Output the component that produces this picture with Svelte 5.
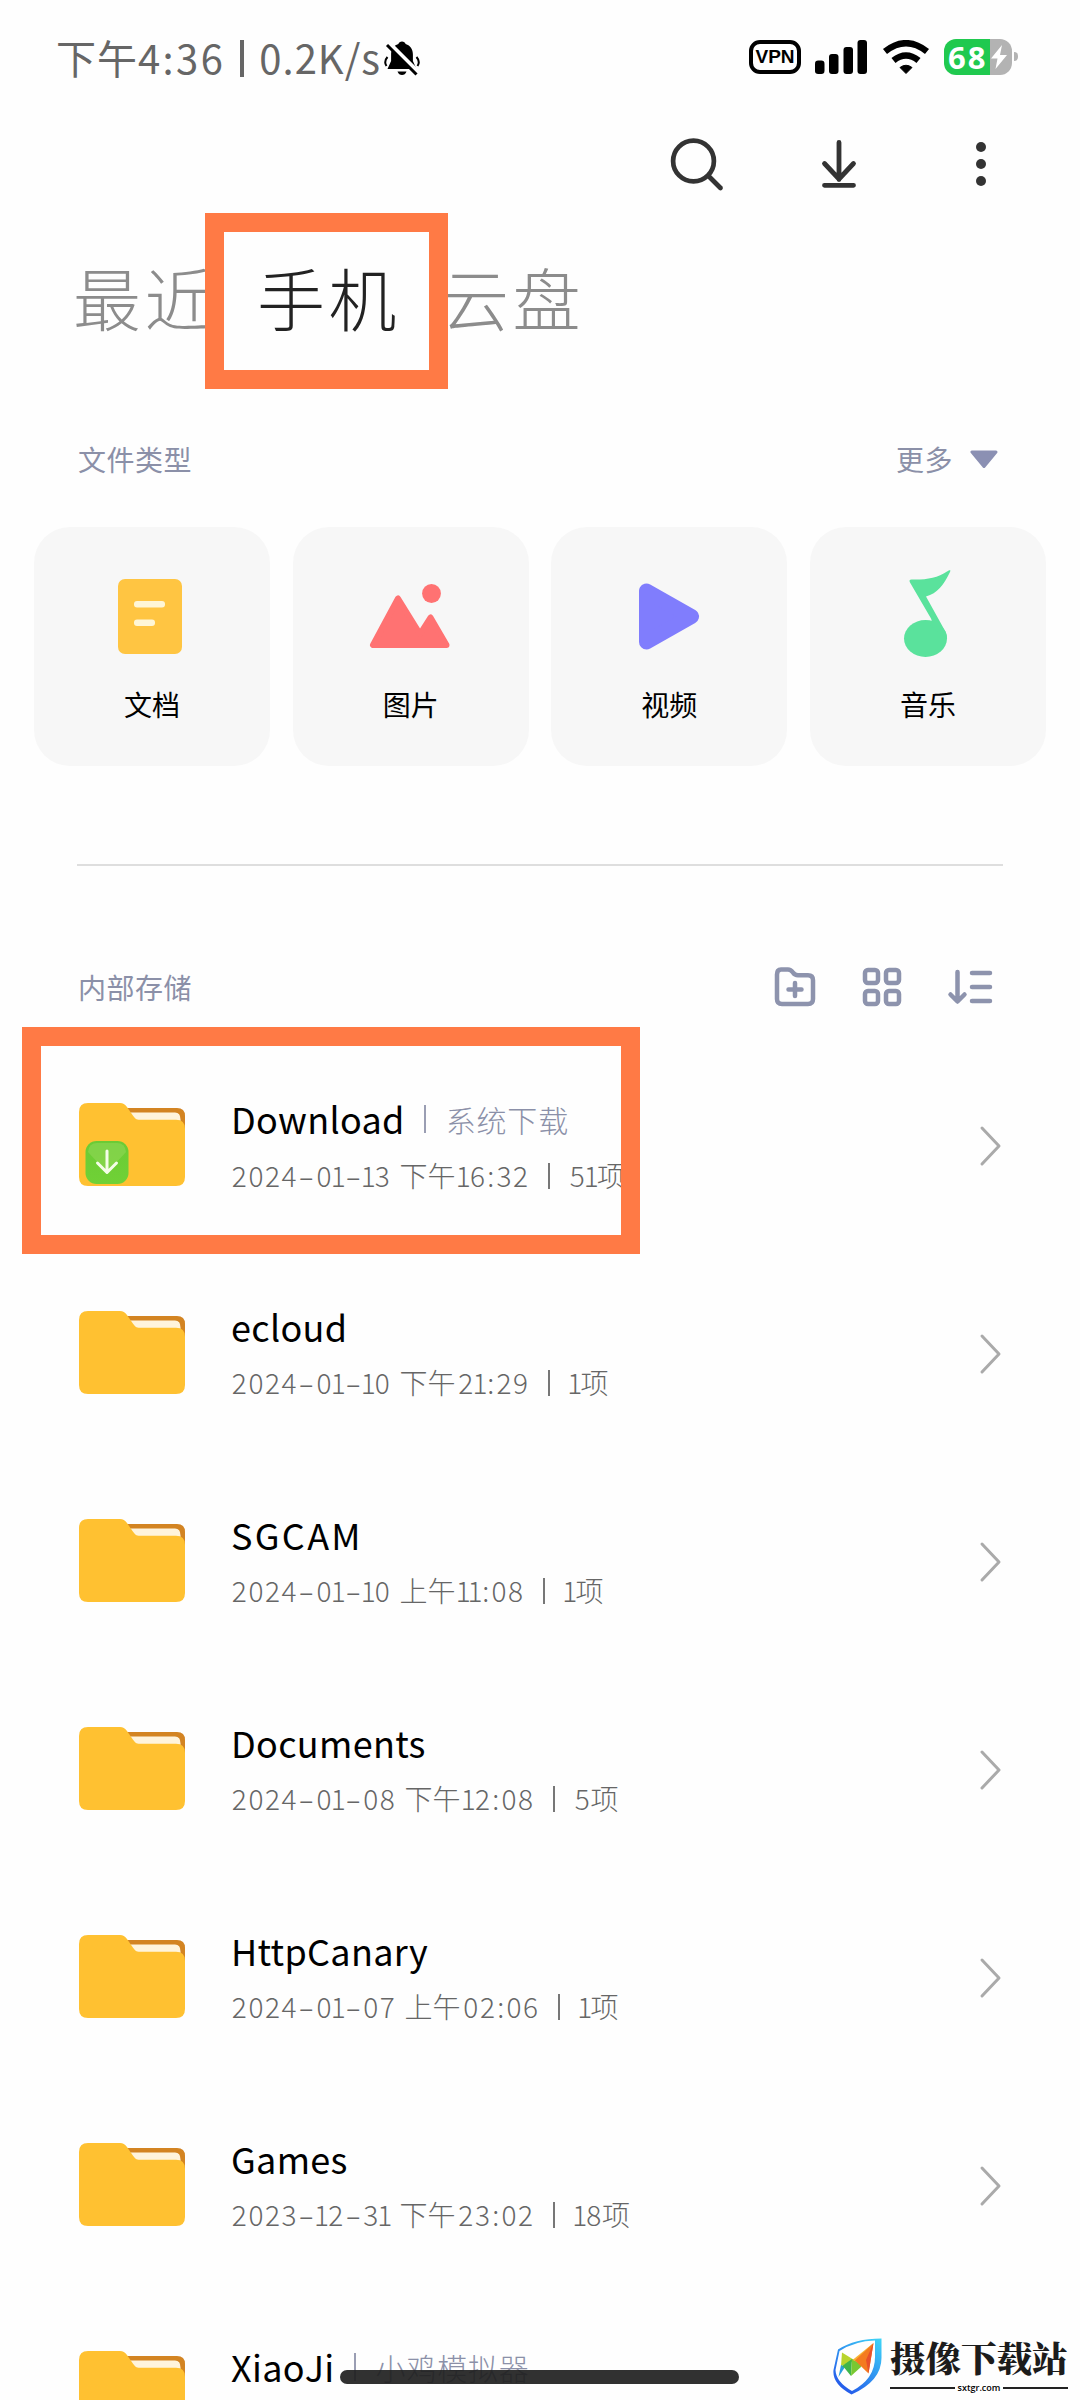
<script>
  const types = [
    { id: 'doc', label: '文档' },
    { id: 'pic', label: '图片' },
    { id: 'video', label: '视频' },
    { id: 'music', label: '音乐' }
  ];
  const folders = [
    { name: 'Download', note: '系统下载', date: '2024-01-13', half: '下午', time: '16:32', count: '51', badge: true },
    { name: 'ecloud', date: '2024-01-10', half: '下午', time: '21:29', count: '1' },
    { name: 'SGCAM', date: '2024-01-10', half: '上午', time: '11:08', count: '1', wide: true },
    { name: 'Documents', date: '2024-01-08', half: '下午', time: '12:08', count: '5' },
    { name: 'HttpCanary', date: '2024-01-07', half: '上午', time: '02:06', count: '1' },
    { name: 'Games', date: '2023-12-31', half: '下午', time: '23:02', count: '18' },
    { name: 'XiaoJi', note: '小鸡模拟器' }
  ];
  // Proportional figures: a narrow 1, a wide hyphen.
  const kind = (c) => (c === '1' ? 'one' : c === '-' ? 'dash' : c === ':' ? 'colon' : 'fig');
</script>

{#snippet figures(text)}
  <span class="figures">{#each [...text] as c}<span class={kind(c)}>{c}</span>{/each}</span>
{/snippet}

<div class="screen">
  <header class="status">
    <div class="clock"><span class="half">下午</span><span class="time">4:36</span><span class="bar"></span><span class="rate">0.2K/s</span></div>
    <svg class="bell" width="36" height="36" viewBox="0 0 36 36">
      <path d="M18 1.500c1.800 0 3.200 1 3.600 2.500 5 1.500 7.300 5.600 7.300 10.500v6.500l3.600 8H3.500l3.600-8v-6.500c0-4.900 2.300-9 7.300-10.500.4-1.500 1.800-2.500 3.600-2.500z" />
      <path d="M13.500 31.500h9c-.8 2.500-2.500 3.500-4.500 3.500s-3.700-1-4.500-3.500z" />
      <path d="M3.500 17q-4 4.500-1 9M32.500 17q4 4.500 1 9" fill="none" stroke="#000" stroke-width="2" />
      <path d="M5 3l29 29" stroke="#fff" stroke-width="4.500" />
      <path d="M3 5l29.500 29.500" stroke="#000" stroke-width="3" />
    </svg>
    <div class="indicators">
      <div class="vpn">VPN</div>
      <svg class="signal" width="53" height="34" viewBox="0 0 53 34">
        <rect x="0" y="20.500" width="9.500" height="13.500" rx="3.200" /><rect x="14" y="14" width="9.500" height="20" rx="3" />
        <rect x="28.500" y="7" width="9.500" height="27" rx="3" /><rect x="42.500" y="0" width="9.500" height="34" rx="3" />
      </svg>
      <svg class="wifi" width="48" height="34" viewBox="0 0 48 34">
        <path d="M3 11.500Q24-5 45 11.500M11.500 20.500Q24 10.500 36.500 20.500" fill="none" stroke="#000" stroke-width="6.500" />
        <path d="M18 27.500q6-4.500 12 0L24 33.500z" stroke="#000" stroke-width="1" stroke-linejoin="round" />
      </svg>
      <div class="battery">
        <span class="level">68</span>
        <svg width="16" height="24" viewBox="0 0 16 24"><path d="M11 0L0 13.500h6.500L4.500 24 16 10H9z" fill="#fff" /></svg>
        <i class="nub"></i>
      </div>
    </div>
  </header>

  <nav class="actions">
    <svg width="56" height="56" viewBox="0 0 56 56"><g fill="none" stroke="#333" stroke-width="4.700" stroke-linecap="round"><circle cx="24.500" cy="25" r="20.400" /><path d="M39.500 40l12 12" /></g></svg>
    <svg width="56" height="56" viewBox="0 0 56 56"><path d="M28 6.500v37M13.500 27.500L28 43l14.500-15.500M13.500 49.300h29" fill="none" stroke="#333" stroke-width="4.800" stroke-linecap="round" stroke-linejoin="round" /></svg>
    <svg width="56" height="56" viewBox="0 0 56 56"><g fill="#333"><circle cx="28" cy="11" r="5" /><circle cx="28" cy="28" r="5" /><circle cx="28" cy="45" r="5" /></g></svg>
  </nav>

  <nav class="tabs">
    <span class="tab">最近</span>
    <span class="tab current">手机</span>
    <span class="tab">云盘</span>
    <i class="mark mark-tab"></i>
  </nav>

  <section class="kinds">
    <div class="heading">
      <span>文件类型</span>
      <span class="more">更多<svg width="28" height="19" viewBox="0 0 28 19"><path d="M2 2h24L14 16.500z" fill="#8b90b3" stroke="#8b90b3" stroke-width="3" stroke-linejoin="round" /></svg></span>
    </div>
    <div class="cards">
      {#each types as type}
        <div class="card">
          <svg width="96" height="96" viewBox="0 0 96 96">
            {#if type.id === 'doc'}
              <rect x="14" y="11" width="64" height="75" rx="7" fill="#ffc542" />
              <rect x="30" y="33" width="31" height="6.500" rx="3" fill="#fff6d6" />
              <rect x="30" y="51.500" width="21" height="6.500" rx="3" fill="#fff6d6" />
            {:else if type.id === 'pic'}
              <circle cx="68.500" cy="25.500" r="9.400" fill="#ff7272" />
              <path d="M35 30.500L10 77H83.500L67.500 49.500 57 66z" fill="#ff7272" stroke="#ff7272" stroke-width="6" stroke-linejoin="round" />
            {:else if type.id === 'video'}
              <path d="M25.500 23v51L70.500 48.500z" fill="#807dfd" stroke="#807dfd" stroke-width="15" stroke-linejoin="round" />
            {:else}
              <ellipse cx="45.500" cy="70.500" rx="21.500" ry="18.500" fill="#5ae29c" />
              <path d="M31.500 11.500c14 .5 26-1.500 35.500-8 3-2 4-1.500 3 .5C63.500 17 57.500 25.500 46 28.500L64 61c2 3 3 6 3 9.500L50.500 58q2-5 .5-7.500L30 14.500q-1.500-3 1.500-3z" fill="#5ae29c" />
            {/if}
          </svg>
          <span>{type.label}</span>
        </div>
      {/each}
    </div>
  </section>

  <hr />

  <section class="storage">
    <div class="heading">
      <span>内部存储</span>
      <div class="tools">
        <svg width="44" height="40" viewBox="0 0 44 40"><path d="M8 2.500h7c2.500 0 3.500 1 5 3 1.300 2 2.500 2.700 5 2.700h10c3.600 0 5 1.600 5 5V32c0 3.400-1.600 5-5 5H9c-3.400 0-5-1.600-5-5V7.500c0-3.400 1.200-5 4-5zM22 16v13M15.500 22.500h13" /></svg>
        <svg width="40" height="40" viewBox="0 0 40 40"><rect x="3" y="3" width="13" height="13" rx="3" /><rect x="24" y="3" width="13" height="13" rx="3" /><rect x="3" y="24" width="13" height="13" rx="3" /><rect x="24" y="24" width="13" height="13" rx="3" /></svg>
        <svg width="46" height="40" viewBox="0 0 46 40"><path d="M10.500 5v29M3.500 27.500l7 7 7-7M25 6h18M25 20h18M25 34h18" /></svg>
      </div>
    </div>
    <ul class="list">
      {#each folders as f}
        <li>
          <svg class="folder" width="106" height="84" viewBox="0 0 106 84">
            <path d="M45 5h53q8 0 8 8v20H45z" fill="#d38422" />
            <path d="M50 9.500h46q5.500 0 5.500 7v18H50z" fill="#fff4dc" />
            <path d="M9 0h32c3 0 5 1.500 7 4l5.500 8c1.500 2 3 4.700 6 4.700H97q9 0 9 9V74q0 9-9 9H9q-9 0-9-9V9q0-9 9-9z" fill="#ffc131" />
            {#if f.badge}
              <defs><linearGradient id="leaf" x1="0" y1="0" x2="0" y2="1"><stop offset="0" stop-color="#6bcb35" /><stop offset="1" stop-color="#70d136" /></linearGradient></defs>
              <rect x="6.500" y="38" width="43" height="43" rx="11" fill="url(#leaf)" />
              <path d="M9 49L28 69.500 47 49q-1-9-9-9H18q-8 0-9 9z" fill="#93d957" opacity=".55" />
              <path d="M28 48v20M18.500 60l9.500 9.500 9.500-9.500" fill="none" stroke="#f4fde8" stroke-width="3" stroke-linecap="round" stroke-linejoin="round" />
            {/if}
          </svg>
          <div class="text">
            <div class="name"><span class:wide={f.wide}>{f.name}</span>{#if f.note}<i class="sep"></i><span class="note">{f.note}</span>{/if}</div>
            <div class="meta">
              {#if f.date}{@render figures(f.date)}<span class="cn">{f.half}</span>{@render figures(f.time)}<i class="sep"></i>{@render figures(f.count)}<span>项</span>{/if}
            </div>
          </div>
          {#if f.date}
            <svg class="chev" width="24" height="42" viewBox="0 0 24 42"><path d="M3 3l17 18L3 39" fill="none" stroke="#aaa" stroke-width="3" stroke-linecap="round" stroke-linejoin="round" /></svg>
          {/if}
        </li>
      {/each}
    </ul>
    <i class="mark mark-row"></i>
  </section>

  <i class="home"></i>
  <div class="stamp">
    <svg width="50" height="58" viewBox="0 0 50 58">
      <defs><linearGradient id="shield" x1="1" y1="0" x2="0.300" y2="1"><stop offset="0" stop-color="#3fd6f7" /><stop offset="1" stop-color="#2459ea" /></linearGradient></defs>
      <path fill-rule="evenodd" d="M5 12.500Q22 1.500 48.500 1.500V20Q49 44 18.500 57.500 -1 47 0.500 33zM6.500 14L2.500 33Q3 45 19 54 42 42 42 20V3.500Q22 4 6.500 14z" fill="url(#shield)" />
      <path d="M9 15.500L22 23.500 8 29z" fill="#b8d42e" />
      <path d="M8 28L12 30 5.500 40z" fill="#2a9fe0" />
      <path d="M9 29L19 22 18 39 11.500 31z" fill="#3fb54a" />
      <path d="M19 22L28 27V30L18 39z" fill="#79c832" />
      <path d="M19.500 23L40.500 6 27 26z" fill="#f9b233" />
      <path d="M40.500 6L35.500 36.500 22 23.500z" fill="#f47b20" />
      <path d="M40.500 6L35.500 36.500 33 23z" fill="#e8502a" />
    </svg>
    <div class="brand"><b>摄像下载站</b><span class="url">sxtgr.com</span></div>
  </div>
</div>

<style>
  :global(body) { margin: 0; background: #fff; }
  .screen { position: relative; width: 1080px; height: 2400px; overflow: hidden; background: #fefefe; font-family: 'Noto Sans CJK SC', sans-serif; color: #000; display: flex; flex-direction: column; }
  .screen > * { flex: none; }
  svg { display: block; flex: none; }
  i { display: block; }
  .status { height: 114px; box-sizing: border-box; padding: 0 68px 0 56px; display: flex; align-items: center; }
  .clock { display: flex; align-items: center; font-size: 40px; line-height: 56px; color: #666; }
  .half { letter-spacing: 1px; }
  .time { letter-spacing: 2.400px; }
  .bar { width: 4px; height: 37px; background: #666; margin: 2px 15px 0 15px; }
  .rate { letter-spacing: 1px; }
  .bell { margin: 2px 0 0 3px; }
  .indicators { margin-left: auto; display: flex; align-items: center; }
  .vpn { width: 52px; height: 34px; box-sizing: border-box; border: 4px solid #000; border-radius: 11px; font: 700 19px/26px 'Liberation Sans', sans-serif; text-align: center; }
  .signal { margin-left: 14px; }
  .wifi { margin-left: 14px; }
  .battery { position: relative; margin-left: 14px; width: 68px; height: 36px; border-radius: 12px; background: linear-gradient(90deg, #20c94f 46px, #b3b3b3 46px); display: flex; align-items: center; }
  .level { font: 700 31px/36px 'Open Sans', sans-serif; color: #fff; margin-left: 4px; letter-spacing: 2px; width: 43px; }
  .nub { position: absolute; left: 70px; top: 13px; width: 4px; height: 9px; border-radius: 0 5px 5px 0; background: #b3b3b3; }
  .actions { box-sizing: border-box; height: 99px; padding: 0 71px 0 0; display: flex; justify-content: flex-end; align-items: center; gap: 86px; }
  .tabs { position: relative; box-sizing: border-box; height: 176px; display: flex; align-items: center; padding: 0 0 8px 73px; font-size: 68px; line-height: 100px; font-weight: 200; letter-spacing: 3.500px; color: #8c8c8c; gap: 41px; }
  .current { color: #222; }
  .mark { position: absolute; box-sizing: border-box; border: 19px solid #ff7a45; }
  .mark-tab { left: 205px; top: 0; width: 243px; height: 176px; }
  .heading { display: flex; justify-content: space-between; align-items: center; font-size: 28px; line-height: 40px; color: #8b90a8; letter-spacing: .5px; padding: 0 82px 0 78px; }
  .kinds { padding-top: 50px; }
  .more { display: flex; align-items: center; gap: 17px; }
  .cards { display: flex; justify-content: space-between; margin: 48px 34px 0; }
  .card { width: 236px; height: 239px; box-sizing: border-box; border-radius: 36px; background: #f7f7f7; display: flex; flex-direction: column; align-items: center; padding-top: 41px; }
  .card span { font-size: 28px; line-height: 40px; margin-top: 20px; }
  hr { border: 0; width: 926px; height: 2px; background: #dedede; margin: 98px auto 0; }
  .storage { position: relative; padding-top: 101px; }
  .tools { display: flex; gap: 45px; margin-right: 5px; }
  .tools svg { fill: none; stroke: #8d93ad; stroke-width: 4.500; stroke-linecap: round; stroke-linejoin: round; }
  .list { list-style: none; margin: 34px 0 0; padding: 0; }
  li { height: 208px; box-sizing: border-box; padding: 0 77px 0 79px; display: flex; align-items: center; }
  .text { margin-left: 46px; display: flex; flex-direction: column; gap: 14px; }
  .name { display: flex; align-items: center; font-size: 36px; line-height: 44px; letter-spacing: .3px; }
  .wide { letter-spacing: 2.300px; }
  .name .sep { width: 2px; height: 28px; background: #9a9eb3; margin: 2px 20px 0 19px; }
  .note { font-size: 30px; font-weight: 300; letter-spacing: .8px; padding-top: 2px; color: #8b90a8; }
  .meta { display: flex; align-items: center; height: 40px; font-size: 28px; line-height: 40px; font-weight: 300; color: #666; }
  .meta .sep { width: 2px; height: 26px; background: #777; margin: 2px 19px 0; }
  .figures, .figures span { display: flex; justify-content: center; }
  .figures .fig { width: 16.600px; }
  .figures .one { width: 11.600px; }
  .figures .colon { width: 10px; }
  .figures .dash { width: 18.400px; transform: scaleX(1.700); }
  .cn { margin-left: 9px; width: 58px; }
  .chev { margin: 2px 0 0 auto; }
  .mark-row { left: 22px; top: 161px; width: 618px; height: 227px; }
  .home { position: absolute; left: 340px; top: 2370px; width: 399px; height: 14px; border-radius: 7px; background: rgba(32, 32, 32, .92); }
  .stamp { position: absolute; left: 833px; top: 2337px; display: flex; gap: 7px; }
  .brand { width: 178px; }
  .brand b { display: block; font: 900 35.500px/40px 'Noto Serif CJK SC', 'Noto Sans CJK SC', serif; white-space: nowrap; color: #1c1c1c; }
  .url { display: flex; align-items: center; gap: 3px; font: 600 9px/12px 'Open Sans', sans-serif; margin-top: 5px; }
  .url::before, .url::after { content: ''; flex: 1; height: 2px; background: #222; }
</style>
